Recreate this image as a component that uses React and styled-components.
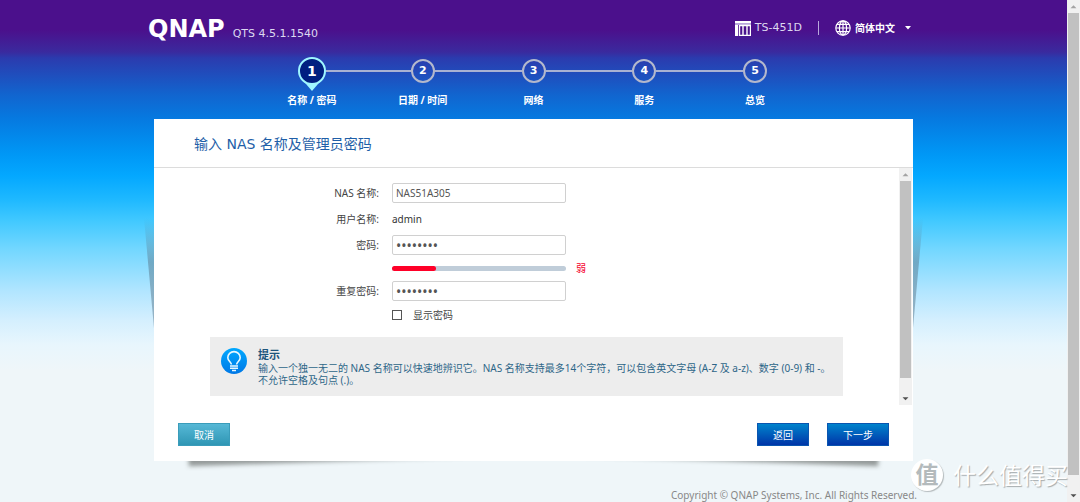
import React, { useState } from "react";
import styled, { createGlobalStyle, css } from "styled-components";

const steps = ["名称 / 密码", "日期 / 时间", "网络", "服务", "总览"];

const Scroll = ({ thumb, rest }) => (
  <StScroll aria-hidden="true">
    <StArrow viewBox="0 0 13 13">
      <path d="M3 8.5 6.5 5 10 8.5Z" fill="#a3a3a3" />
    </StArrow>
    <StThumb $grow={thumb} />
    <StRest $grow={rest} />
    <StArrow viewBox="0 0 13 13">
      <path d="M3 5 6.5 8.5 10 5Z" fill="#505050" />
    </StArrow>
  </StScroll>
);

const App = () => {
  const [name, setName] = useState("NAS51A305");
  const [password, setPassword] = useState("password");
  const [repeat, setRepeat] = useState("password");
  const [show, setShow] = useState(false);

  return (
    <StPage>
      <GlobalStyle />
      <StMain>
        <StHeader>
          <StBrand>
            <StLogo>QNAP</StLogo>
            <StVersion>QTS 4.5.1.1540</StVersion>
          </StBrand>
          <StTools>
            <StModel>
              <svg width="16" height="15" viewBox="0 0 16 15">
                <path d="M0 0H16V2H0ZM0 4H3V15H0Z" fill="#fff" />
                <path d="M0 2H16V4H0Z" fill="#b9a6dc" />
                <path
                  d="M4.5 4V14.5H15.5V4.5H4.5M8 5V14M12 5V14"
                  stroke="#fff"
                  strokeWidth="1.4"
                  fill="none"
                />
              </svg>
              TS-451D
            </StModel>
            <StLanguage>
              <svg width="16" height="16" viewBox="0 0 16 16" fill="none">
                <g stroke="#fff" strokeWidth="1.2">
                  <circle cx="8" cy="8" r="7.2" />
                  <ellipse cx="8" cy="8" rx="3.6" ry="7.2" />
                  <path d="M8 1V15M1 8H15M2 4.4H14M2 11.6H14" />
                </g>
              </svg>
              <StSelect aria-label="语言" defaultValue="chs">
                <option value="chs">简体中文</option>
              </StSelect>
              <svg width="6" height="4" viewBox="0 0 6 4">
                <path d="M0 0H6L3 3.5Z" fill="#fff" />
              </svg>
            </StLanguage>
          </StTools>
        </StHeader>

        <StSteps>
          {steps.map((step, i) => (
            <StStep key={step}>
              <StTrack>
                <StLine $hidden={i === 0} />
                {i === 0 ? (
                  <StPin>
                    <svg width="24" height="14" viewBox="0 0 24 14">
                      <path d="M0 0H24L12 14Z" fill="#9ff6ff" />
                    </svg>
                    <StCircle $active>{i + 1}</StCircle>
                  </StPin>
                ) : (
                  <StCircle>{i + 1}</StCircle>
                )}
                <StLine $hidden={i === steps.length - 1} />
              </StTrack>
              <span>{step}</span>
            </StStep>
          ))}
        </StSteps>

        <StPanel>
          <StCard>
            <StTitle>输入 NAS 名称及管理员密码</StTitle>
            <StBody>
              <StContent>
                <StForm>
                  <StLabel htmlFor="name">NAS 名称:</StLabel>
                  <StInput
                    id="name"
                    value={name}
                    onChange={(e) => setName(e.target.value)}
                  />
                  <StLabel as="span">用户名称:</StLabel>
                  <StValue>admin</StValue>
                  <StLabel htmlFor="password">密码:</StLabel>
                  <StInput
                    id="password"
                    type={show ? "text" : "password"}
                    value={password}
                    onChange={(e) => setPassword(e.target.value)}
                  />
                  <StStrength>
                    <StBar>
                      <StFill />
                    </StBar>
                    弱
                  </StStrength>
                  <StLabel htmlFor="repeat">重复密码:</StLabel>
                  <StInput
                    id="repeat"
                    type={show ? "text" : "password"}
                    value={repeat}
                    onChange={(e) => setRepeat(e.target.value)}
                  />
                  <StCheck>
                    <input
                      type="checkbox"
                      checked={show}
                      onChange={(e) => setShow(e.target.checked)}
                    />
                    显示密码
                  </StCheck>
                </StForm>
                <StHint>
                  <svg width="26" height="26" viewBox="0 0 26 26" fill="none">
                    <defs>
                      <linearGradient id="bulb" x1="0" y1="0" x2="0" y2="1">
                        <stop offset="0" stopColor="#00a8ff" />
                        <stop offset="1" stopColor="#0078e6" />
                      </linearGradient>
                    </defs>
                    <circle cx="13" cy="13" r="13" fill="url(#bulb)" />
                    <path
                      d="M10.4 16.6C10.4 13.8 6.8 13 6.8 9.8A6.2 6.2 0 0 1 19.2 9.8C19.2 13 15.6 13.8 15.6 16.6"
                      stroke="#e8f8ff"
                      strokeWidth="1.6"
                    />
                    <path
                      d="M9 18H17M9 20.2H17M11 22.6H15"
                      stroke="#e8f8ff"
                      strokeWidth="1.5"
                    />
                  </svg>
                  <div>
                    <StHintTitle>提示</StHintTitle>
                    <StHintText>
                      输入一个独一无二的 NAS 名称可以快速地辨识它。NAS
                      名称支持最多14个字符，可以包含英文字母 (A-Z 及
                      a-z)、数字 (0-9) 和 -。
                      <br />
                      不允许空格及句点 (.)。
                    </StHintText>
                  </div>
                </StHint>
              </StContent>
              <Scroll thumb={197} rest={14} />
            </StBody>
            <StFooter>
              <StButton>取消</StButton>
              <StButtons>
                <StButton $primary>返回</StButton>
                <StButton $primary $wide>
                  下一步
                </StButton>
              </StButtons>
            </StFooter>
          </StCard>
        </StPanel>

        <StCopyright>
          Copyright © QNAP Systems, Inc. All Rights Reserved.
        </StCopyright>
      </StMain>
      <Scroll thumb={462} rest={14} />
      <StWatermark>
        <StMark>值</StMark>
        什么值得买
      </StWatermark>
    </StPage>
  );
};

export default App;

const GlobalStyle = createGlobalStyle`
  * {
    box-sizing: border-box;
  }

  body {
    margin: 0;
  }

  body,
  input,
  select,
  button {
    font-family: "Noto Sans", "Noto Sans CJK SC", sans-serif;
    font-size: 10px;
  }
`;

const StPage = styled.div`
  position: relative;
  display: flex;
  height: 100vh;
  overflow: hidden;
  color: #fff;
  background: linear-gradient(
    #4b108c 0,
    #4b108c 30px,
    #3a2a9e 52px,
    #2b3bae 58px,
    #1165cf 95px,
    #0679e0 118px,
    #0098f6 155px,
    #04a8ff 176px,
    #1fb9ff 200px,
    #40c8ff 220px,
    #74d7ff 250px,
    #b0e5ff 290px,
    #d4effe 320px,
    #e8f6fd 345px,
    #eff6f9 370px
  );
`;

const StMain = styled.main`
  flex: 1;
  display: flex;
  flex-direction: column;
  align-items: center;
`;

const StHeader = styled.header`
  flex: none;
  display: flex;
  justify-content: space-between;
  align-items: flex-start;
  width: 100%;
  max-width: 771px;
  height: 57px;
  padding: 18px 8px 0 0;
  font-family: "DejaVu Sans", sans-serif;
  font-size: 11px;
`;

const StBrand = styled.div`
  display: flex;
  align-items: baseline;
  gap: 8px;
`;

const StLogo = styled.span`
  font-size: 24px;
  line-height: 22px;
  font-weight: bold;
`;

const StVersion = styled.span`
  color: #dcd8f0;
`;

const StTools = styled.div`
  display: flex;
  align-items: center;
  line-height: 20px;
`;

const StModel = styled.div`
  display: flex;
  align-items: center;
  gap: 4px;
  color: #dcd8f0;
`;

const StLanguage = styled.div`
  display: flex;
  align-items: center;
  gap: 4px;
  height: 14px;
  margin-left: 16px;
  padding-left: 16px;
  border-left: 1px solid #b8a8dc;
`;

const StSelect = styled.select`
  appearance: none;
  width: 46px;
  padding: 0;
  border: 0;
  background: none;
  color: #fff;
  font-weight: bold;
`;

const StSteps = styled.nav`
  flex: none;
  display: flex;
  width: 100%;
  max-width: 554px;
  height: 62px;
`;

const StStep = styled.div`
  flex: 1;
  display: flex;
  flex-direction: column;
  align-items: center;
  font-weight: bold;
  line-height: 16px;
`;

const StTrack = styled.div`
  display: flex;
  justify-content: center;
  align-items: center;
  width: 100%;
  height: 28px;
  margin-bottom: 7px;
`;

const StLine = styled.span`
  flex: 1;
  height: 2px;
  background: ${({ $hidden }) => ($hidden ? "transparent" : "#a9b1d2")};
`;

const StCircle = styled.span`
  position: relative;
  display: flex;
  align-items: center;
  justify-content: center;
  width: 24px;
  height: 24px;
  border: 2px solid #b4b8cc;
  border-radius: 50%;
  font-family: "DejaVu Sans", sans-serif;
  font-size: 11px;

  ${({ $active }) =>
    $active &&
    css`
      width: 28px;
      height: 28px;
      border-color: #9ff6ff;
      background: #001f80;
      font-size: 14px;
    `}
`;

const StPin = styled.div`
  position: relative;

  svg {
    position: absolute;
    top: 20px;
    left: 2px;
  }
`;

const StPanel = styled.div`
  position: relative;
  z-index: 0;
  flex: none;
  width: 100%;
  max-width: 759px;

  /* lifted corners under the card */
  &::before,
  &::after {
    content: "";
    position: absolute;
    z-index: -1;
    bottom: 12px;
    left: 34px;
    width: 40%;
    height: 20px;
    box-shadow: 0 12px 4px rgba(60, 64, 60, 0.5);
    transform: rotate(-2deg);
  }

  &::after {
    left: auto;
    right: 34px;
    transform: rotate(2deg);
  }
`;

const StCard = styled.section`
  background: #fff;
  color: #444;

  /* folded sides */
  &::before,
  &::after {
    content: "";
    position: absolute;
    top: 99px;
    left: -10px;
    width: 10px;
    height: 110px;
    background: linear-gradient(rgba(90, 120, 140, 0), rgba(90, 120, 140, 0.5) 40%);
    clip-path: polygon(0 0, 100% 0, 100% 100%);
  }

  &::after {
    left: auto;
    right: -10px;
    clip-path: polygon(0 0, 100% 0, 0 100%);
  }
`;

const StTitle = styled.h1`
  margin: 0;
  padding: 3px 40px 0;
  border-bottom: 1px solid #dcdcdc;
  color: #1f5fa8;
  font-family: "DejaVu Sans", "Noto Sans CJK SC", sans-serif;
  font-size: 14px;
  font-weight: normal;
  line-height: 45px;
`;

const StBody = styled.div`
  display: flex;
  padding-right: 1px;
`;

const StContent = styled.div`
  flex: 1;
  padding: 15px 56px 9px;
`;

const StForm = styled.form`
  display: grid;
  grid-template-columns: 169px 174px;
  column-gap: 13px;
  row-gap: 6px;
  align-items: center;
  line-height: 20px;
`;

const StLabel = styled.label`
  text-align: right;
`;

const StValue = styled.span`
  color: #333;
`;

const StInput = styled.input`
  width: 100%;
  height: 20px;
  padding: 0 3px;
  border: 1px solid #d0d0d0;
  border-radius: 2px;
  background: #fff;
  color: #555;

  &[type="password"] {
    font-size: 14px;
  }
`;

const StStrength = styled.div`
  grid-column: 2;
  display: flex;
  align-items: center;
  gap: 10px;
  height: 14px;
  color: #f5002d;
`;

const StBar = styled.div`
  flex: none;
  width: 100%;
  height: 5px;
  border-radius: 3px;
  background: #c0cdd9;
`;

const StFill = styled.div`
  width: 25%;
  height: 100%;
  border-radius: 3px;
  background: #ff0028;
`;

const StCheck = styled.label`
  grid-column: 2;
  display: flex;
  align-items: center;
  gap: 11px;
  height: 16px;

  input {
    appearance: none;
    width: 10px;
    height: 10px;
    margin: 0;
    border: 1px solid #555;
    background: #fff;
  }

  input:checked {
    background: #555;
  }
`;

const StHint = styled.div`
  display: flex;
  gap: 11px;
  min-height: 59px;
  margin-top: 14px;
  padding: 11px 0 0 11px;
  background: #ededed;
  color: #2e6688;
`;

const StHintTitle = styled.h2`
  margin: 0;
  color: #1d557c;
  font-size: 11px;
  line-height: 14px;
`;

const StHintText = styled.p`
  margin: 0;
  line-height: 12px;
`;

const StScroll = styled.div`
  flex: none;
  display: flex;
  flex-direction: column;
  width: 13px;
  padding: 0 1px;
  background: #f1f1f1;
`;

const StArrow = styled.svg`
  flex: none;
  width: 11px;
  height: 13px;
`;

const StThumb = styled.div`
  flex: ${({ $grow }) => $grow};
  background: #c1c1c1;
`;

const StRest = styled.div`
  flex: ${({ $grow }) => $grow};
`;

const StFooter = styled.footer`
  display: flex;
  justify-content: space-between;
  padding: 18px 24px 15px;
`;

const StButtons = styled.div`
  display: flex;
  gap: 18px;
`;

const StButton = styled.button`
  width: ${({ $wide }) => ($wide ? "62px" : "52px")};
  height: 23px;
  padding: 0;
  border: 1px solid #3a9cba;
  background: linear-gradient(#56b8d6, #2f96b4);
  color: #fff;

  ${({ $primary }) =>
    $primary &&
    css`
      border-color: #0a55b0;
      background: linear-gradient(#0083cc, #0035a8);
    `}
`;

const StCopyright = styled.footer`
  flex: none;
  width: 100%;
  max-width: 767px;
  margin-top: 27px;
  color: #888;
  font-size: 10px;
  line-height: 14px;
  text-align: right;
`;

const StWatermark = styled.div`
  position: absolute;
  right: 12px;
  bottom: 10px;
  display: flex;
  align-items: center;
  gap: 10px;
  color: #fff;
  font-size: 23px;
  line-height: 34px;
  text-shadow: 1px 1px 1px #a4aaac;
`;

const StMark = styled.span`
  width: 32px;
  height: 32px;
  border-radius: 50%;
  background: #fff;
  box-shadow: 1px 1px 1px #b4babc;
  color: #b4babc;
  font-weight: bold;
  line-height: 30px;
  text-align: center;
  text-shadow: none;
`;
